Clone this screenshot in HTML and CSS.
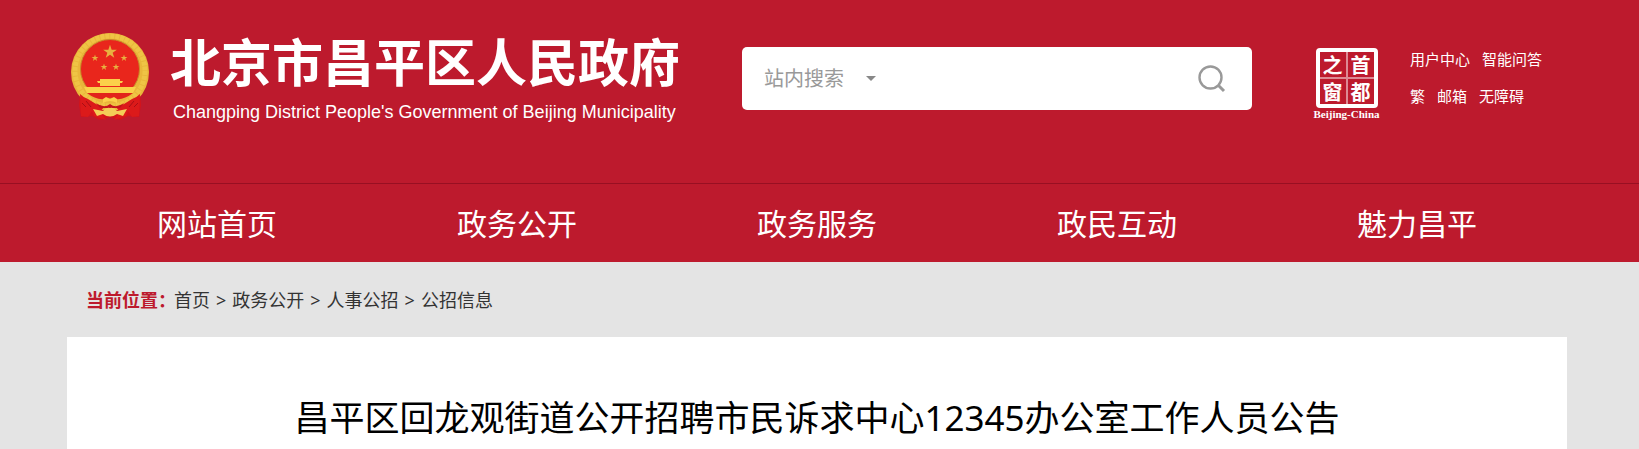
FILE: index.html
```html
<!DOCTYPE html>
<html lang="zh-CN">
<head>
    <meta charset="UTF-8">
    <meta name="viewport" content="width=device-width, initial-scale=1.0">
    <title>昌平区回龙观街道公开招聘市民诉求中心12345办公室工作人员公告</title>
    <link rel="stylesheet" href="styles.css">
</head>
<body>
    <header class="header">
        <div class="header-top">
            <a class="brand" href="#">
                <svg class="emblem" viewBox="0 0 80 87" aria-hidden="true">
                    <defs>
                        <polygon id="star" points="0,-10 2.3,-3.1 9.5,-3.1 3.7,1.2 5.9,8.1 0,3.8 -5.9,8.1 -3.7,1.2 -9.5,-3.1 -2.3,-3.1"/>
                    </defs>
                    <path d="M10 60 L9 72 L11 84 L22 83 L30 87 L40 84 L50 87 L58 83 L69 84 L71 72 L70 60 Z" fill="#d4141b"/>
                    <circle cx="40" cy="39" r="39" fill="#e9b63a"/>
                    <circle cx="40" cy="38" r="35" fill="none" stroke="#efc445" stroke-width="5" stroke-dasharray="4 1"/>
                    <circle cx="40" cy="36" r="29.500" fill="#e9261c" stroke="#c98a2a" stroke-width="1"/>
                    <g fill="#e8b040">
                        <use href="#star" transform="translate(40 19) scale(.72)"/>
                        <use href="#star" transform="translate(25 25) scale(.36)"/>
                        <use href="#star" transform="translate(54 25) scale(.36)"/>
                        <use href="#star" transform="translate(34 34) scale(.36)"/>
                        <use href="#star" transform="translate(46 34) scale(.36)"/>
                    </g>
                    <path d="M30 46 H50 V48 H53 L52 50 H50 V53 H30 V50 H28 L27 48 H30 Z" fill="#fbd04a"/>
                    <path d="M14 54 H66 L63 60 H17 Z" fill="#fbd04a"/>
                    <path d="M17 60 H63 Q54 67 46 66 L40 63 L34 66 Q26 67 17 60 Z" fill="#e2231b"/>
                    <path d="M10 61 Q14 65 18 66 L26 71 L34 74 L30 79 L36 87 L24 83 L22 78 L18 84 L11 83 Z" fill="#dc1a1a"/>
                    <path d="M70 61 Q66 65 62 66 L54 71 L46 74 L50 79 L44 87 L56 83 L58 78 L62 84 L69 83 Z" fill="#dc1a1a"/>
                    <path d="M33 66 L36 64 L40 66 L44 64 L47 66 L47 70 Q40 66 33 70 Z" fill="#fbd04a"/>
                    <path d="M26 70 Q34 76 40 71 Q46 76 54 70 L50 75 H30 Z" fill="#c4141a"/>
                    <path d="M23 76 L33 78 Q36 74 40 75 Q44 74 47 78 L57 76 L53 83 L47 81 Q40 86 33 81 L27 83 Z" fill="#f4cd57"/>
                    <path d="M12 70 l4 4 M16 68 l5 6 M68 70 l-4 4 M64 68 l-5 6" stroke="#a80e16" stroke-width="1"/>
                </svg>
                <span class="brand-text">
                    <span class="brand-cn">北京市昌平区人民政府</span>
                    <span class="brand-en">Changping District People's Government of Beijing Municipality</span>
                </span>
            </a>

            <form class="search">
                <select class="search-type" aria-label="搜索范围">
                    <option>站内搜索</option>
                </select>
                <span class="caret"></span>
                <input class="search-input" type="text" aria-label="搜索内容">
                <button class="search-button" type="button" aria-label="搜索">
                    <svg viewBox="0 0 28 28" width="28" height="28">
                        <circle cx="12.500" cy="12.500" r="11" fill="none" stroke="#999" stroke-width="2.400"/>
                        <path d="M20 20 L26 26" fill="none" stroke="#999" stroke-width="3"/>
                    </svg>
                </button>
            </form>

            <a class="capital" href="#">
                <span class="seal">
                    <span>之</span><span>首</span>
                    <span>窗</span><span>都</span>
                </span>
                <span class="capital-en">Beijing-China</span>
            </a>

            <div class="user-links">
                <div><a href="#">用户中心</a><a href="#">智能问答</a></div>
                <div><a href="#">繁</a><a href="#">邮箱</a><a href="#">无障碍</a></div>
            </div>
        </div>

        <nav class="nav">
            <a href="#">网站首页</a>
            <a href="#">政务公开</a>
            <a href="#">政务服务</a>
            <a href="#">政民互动</a>
            <a href="#">魅力昌平</a>
        </nav>
    </header>

    <main class="main">
        <div class="location">
            <strong>当前位置：</strong>
            <a href="#">首页</a>
            <span>&gt;</span>
            <a href="#">政务公开</a>
            <span>&gt;</span>
            <a href="#">人事公招</a>
            <span>&gt;</span>
            <a href="#">公招信息</a>
        </div>
        <article class="article">
            <h1>昌平区回龙观街道公开招聘市民诉求中心12345办公室工作人员公告</h1>
        </article>
    </main>
</body>
</html>
```
FILE: styles.css
```css
* {
    box-sizing: border-box;
}
body {
    margin: 0;
    min-height: 100vh;
    display: flex;
    flex-direction: column;
    background-color: #e4e4e4;
    color: #333;
    font-family: "Noto Sans", "Noto Sans CJK SC", sans-serif;
}
a {
    color: inherit;
    text-decoration: none;
}

/* header */
.header {
    background-color: #bd1a2d;
    color: #fff;
}
.header-top {
    display: flex;
    align-items: flex-start;
    height: 183px;
    padding: 32px 72px 0 67px;
}
.brand {
    display: flex;
    flex: 0 0 675px;
    gap: 20px;
    padding-left: 3px;
}
.emblem {
    width: 80px;
    height: 87px;
    margin-top: 1px;
}
.brand-text {
    display: flex;
    flex-direction: column;
}
.brand-cn {
    font-family: "Noto Sans CJK SC", sans-serif;
    font-size: 51px;
    font-weight: bold;
    line-height: 56px;
    white-space: nowrap;
}
.brand-en {
    padding: 14px 0 0 3px;
    font-family: "Liberation Sans", Arial, sans-serif;
    font-size: 18px;
    line-height: 20px;
    white-space: nowrap;
}

/* search */
.search {
    flex: 1;
    min-width: 0;
    height: 63px;
    margin-top: 15px;
    padding: 0 26px 0 22px;
    display: flex;
    align-items: center;
    background-color: #fff;
    border-radius: 5px;
}
.search-type {
    width: 84px;
    padding: 0;
    border: none;
    background: none;
    appearance: none;
    color: #999;
    font-family: inherit;
    font-size: 20px;
    outline: none;
}
.caret {
    margin-left: 18px;
    border: 5px solid transparent;
    border-top-color: #888;
    border-bottom: none;
}
.search-input {
    flex: 1;
    min-width: 0;
    height: 40px;
    margin: 0 16px;
    border: none;
    outline: none;
    background: none;
    font-size: 20px;
}
.search-button {
    display: flex;
    padding: 0;
    border: none;
    background: none;
    cursor: pointer;
}

/* capital window */
.capital {
    width: 67px;
    margin: 16px 0 0 61px;
    display: flex;
    flex-direction: column;
    align-items: center;
}
.seal {
    width: 62px;
    height: 60px;
    display: grid;
    grid-template-columns: 1fr 1fr;
    gap: 2px;
    border: 4px solid #fff;
    border-radius: 4px;
    background-color: #dd8a94;
}
.seal span {
    background-color: #bd1a2d;
    font-family: "Noto Sans CJK SC", sans-serif;
    font-size: 20px;
    font-weight: bold;
    line-height: 25px;
    text-align: center;
}
.capital-en {
    font-family: "Liberation Serif", serif;
    font-size: 11px;
    font-weight: bold;
    line-height: 12px;
    white-space: nowrap;
}

.user-links {
    flex: 0 0 157px;
    margin: 9px 0 0 30px;
    font-size: 15px;
    line-height: 37px;
}
.user-links div {
    display: flex;
    gap: 12px;
    white-space: nowrap;
}

/* nav */
.nav {
    display: flex;
    padding: 0 72px 0 67px;
    border-top: 1px solid #980f22;
}
.nav a {
    flex: 1;
    padding-top: 2px;
    font-size: 30px;
    line-height: 76px;
    text-align: center;
}

/* content */
.main {
    flex: 1;
    display: flex;
    flex-direction: column;
    padding: 0 72px 0 67px;
}
.location {
    display: flex;
    gap: 6px;
    padding: 2px 0 0 19px;
    font-size: 18px;
    line-height: 73px;
}
.location strong {
    margin-right: -8px;
    color: #bd1a2d;
}
.article {
    flex: 1;
    padding-top: 51px;
    background-color: #fff;
}
.article h1 {
    margin: 0;
    color: #000;
    font-size: 35px;
    font-weight: normal;
    line-height: 60px;
    text-align: center;
}
```
